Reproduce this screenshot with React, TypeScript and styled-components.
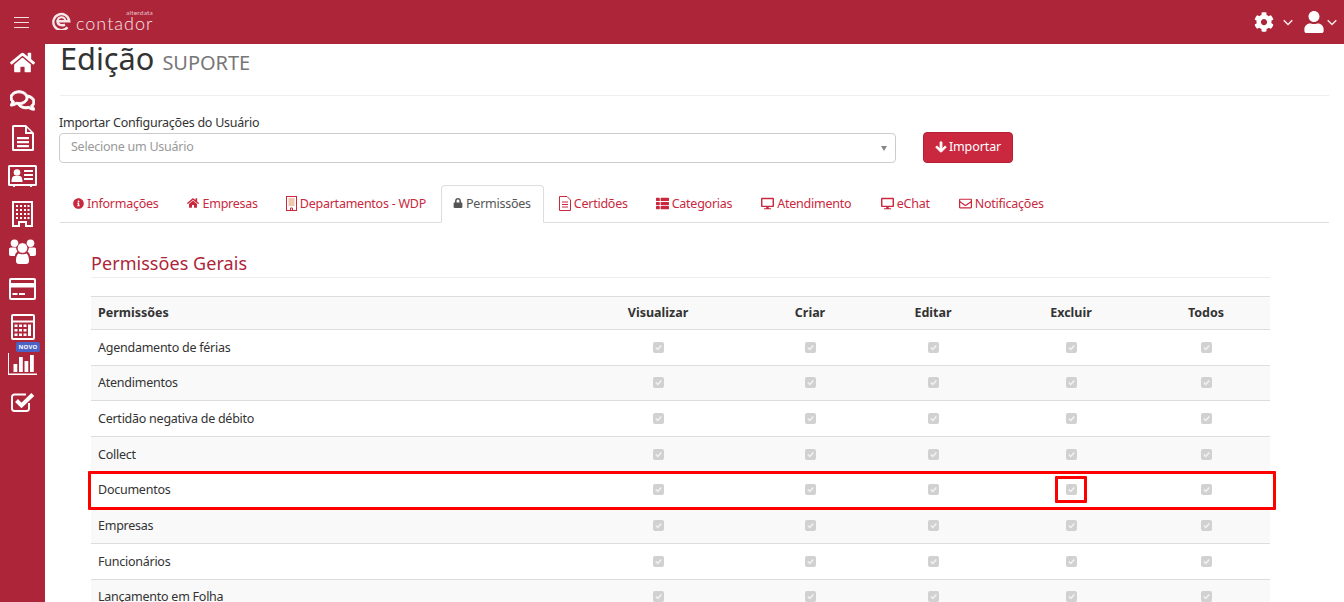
import React from 'react';
import styled, { createGlobalStyle } from 'styled-components';
import {
  FaHome, FaRegComments, FaInfoCircle, FaLock, FaThList, FaDesktop, FaRegEnvelope, FaCog, FaUser, FaArrowDown,
} from 'react-icons/fa';

const Global = createGlobalStyle`
  html, body { margin: 0; padding: 0; height: 602px; overflow: hidden; background: #fff; }
  body { font-family: "Noto Sans", "Open Sans", sans-serif; font-size: 12.5px; letter-spacing: -.25px; color: #333; }
`;

const RED = '#ad2539';
const LINK = '#c9283e';

const Page = styled.div`width: 1344px; height: 602px; display: flex; flex-direction: column; overflow: hidden;`;
const Header = styled.header`height: 44px; flex: none; background: ${RED}; display: flex; align-items: center; color: #fff;`;
const Burger = styled.div`
  width: 15px; height: 11px; margin-left: 14px; flex: none;
  border-top: 1px solid #f3dfe2; border-bottom: 1px solid #f3dfe2; position: relative; box-sizing: border-box;
  &::after { content: ""; position: absolute; left: 0; right: 0; top: 4px; height: 1px; background: #f3dfe2; }
`;
const Logo = styled.div`display: flex; align-items: flex-end; margin-left: 23px; width: 102px; height: 24px; position: relative; color: #f6e6e8; padding-bottom: 4px; box-sizing: border-box;`;
const LogoWord = styled.span`font-family: Lato, sans-serif; font-weight: 300; font-size: 18px; letter-spacing: 1px; line-height: 12px; margin-left: 5px; margin-bottom: 1px;`;
const LogoSmall = styled.span`position: absolute; right: 1px; top: 0; font-family: Lato, sans-serif; font-size: 6.5px; line-height: 6px; letter-spacing: .2px; font-weight: 400; opacity: .8;`;
const HeaderRight = styled.div`margin-left: auto; display: flex; align-items: center; color: #fff;`;
const GearIcon = styled(FaCog)`font-size: 20px;`;
const UserIcon = styled(FaUser)`font-size: 22px; margin-left: 10px;`;
const CaretSvg = styled.svg<{ $gap: number }>`display: block; margin-left: ${p => p.$gap}px;`;
const HeaderEnd = styled.span`width: 7px;`;

const Body = styled.div`flex: 1; display: flex; min-height: 0;`;
const Side = styled.nav`width: 45px; flex: none; background: ${RED}; display: flex; flex-direction: column; align-items: center; color: #fff;`;
const SideItem = styled.div`height: 37.700px; flex: none; width: 45px; display: flex; align-items: center; justify-content: center; position: relative; font-size: 25px;`;
const CommentsIcon = styled(FaRegComments)`stroke: currentColor; stroke-width: 22px;`;
const Badge = styled.span`
  position: absolute; top: -4px; left: 16px; width: 24px; height: 10px; border-radius: 2px; background: #4a63c4; color: #fff;
  font-size: 6px; font-weight: 700; line-height: 10px; text-align: center; letter-spacing: .2px;
`;

const Main = styled.main`flex: 1; min-width: 0; padding: 0 15px; overflow: hidden; position: relative;`;
const Title = styled.div`height: 52px; border-bottom: 1px solid #eee; box-sizing: border-box;`;
const TitleMain = styled.span`font-size: 30.700px; line-height: 28px; color: #333; letter-spacing: 0; display: inline-block;`;
const TitleSub = styled.span`font-size: 20px; color: #777; margin-left: 8px; letter-spacing: -.05px;`;

const ImportRow = styled.div`display: flex; align-items: flex-end; margin-top: 18px;`;
const Field = styled.div`width: 837px; margin-left: -1px;`;
const Label = styled.div`line-height: 17px; color: #333; margin-bottom: 2px;`;
const Select = styled.div`
  height: 30px; box-sizing: border-box; border: 1px solid #ccc; border-radius: 4px; display: flex; align-items: center; padding: 0 8px 3px 11px;
  color: #999; justify-content: space-between; background: #fff;
`;
const Arrow = styled.span`width: 0; height: 0; margin-top: 3px; border-left: 3px solid transparent; border-right: 3px solid transparent; border-top: 5px solid #888;`;
const Button = styled.button`
  margin-left: 27px; width: 90px; height: 31px; background: ${LINK}; border: 1px solid #b81f36; border-radius: 4px; color: #fff; font: 12.5px "Noto Sans", sans-serif; letter-spacing: -.1px;
  display: flex; align-items: center; justify-content: center; gap: 2px; padding: 0 0 2px;
`;
const DownIcon = styled(FaArrowDown)`stroke: currentColor; stroke-width: 40px;`;

const Tabs = styled.div`display: flex; margin-top: 22px; height: 38px; box-sizing: border-box; border-bottom: 1px solid #ddd;`;
const Tab = styled.div<{ $active?: boolean; $shift?: number }>`
  flex: none; height: 38px; box-sizing: border-box; display: flex; align-items: center; gap: 3px; padding: 0 12px 2px ${p => (p.$active ? 11 : 12)}px; margin: 0 2px 0 ${p => p.$shift ?? 0}px;
  color: ${p => (p.$active ? '#555' : LINK)}; border-radius: 4px 4px 0 0;
  border: 1px solid ${p => (p.$active ? '#ddd' : 'transparent')}; border-bottom-color: ${p => (p.$active ? '#fff' : 'transparent')}; background: ${p => (p.$active ? '#fff' : 'transparent')};
`;
const TabHome = styled(FaHome)`margin-right: 1px;`;

const Content = styled.section`padding: 28px 59px 0 31px; position: relative;`;
const SectionTitle = styled.h3`margin: 0; font-weight: 400; font-size: 18px; line-height: 25px; color: ${RED}; border-bottom: 1px solid #eee; padding-bottom: 1px; letter-spacing: .05px;`;
const Table = styled.table`width: 1179px; border-collapse: collapse; table-layout: fixed; margin-top: 18px;`;
const Th = styled.th<{ $w: number; $left?: boolean }>`
  width: ${p => p.$w}px; box-sizing: border-box; height: 33px; padding: 0 7px 1px; text-align: ${p => (p.$left ? 'left' : 'center')}; font-weight: 700; color: #333; letter-spacing: 0;
  background: #f9f9f9; border-top: 1px solid #ddd; border-bottom: 1px solid #ddd;
`;
const Tr = styled.tr<{ $stripe: boolean }>`background: ${p => (p.$stripe ? '#f9f9f9' : '#fff')};`;
const Td = styled.td<{ $left?: boolean }>`
  height: 35.7px; box-sizing: border-box; padding: 0 7px ${p => (p.$left ? '.5px' : '0')}; text-align: ${p => (p.$left ? 'left' : 'center')}; border-bottom: 1px solid #ddd; color: #333;
`;
const Check = styled.span`
  display: inline-flex; width: 11px; height: 11px; margin-bottom: 3px; border-radius: 2px; background: #d1d1d1; vertical-align: middle; align-items: center; justify-content: center; color: #f2f2f2;
`;
const Marker = styled.div<{ $l: number; $t: number; $w: number; $h: number }>`
  position: absolute; left: ${p => p.$l}px; top: ${p => p.$t}px; width: ${p => p.$w}px; height: ${p => p.$h}px; box-sizing: border-box; border: 3px solid #f00; border-radius: 1px; pointer-events: none;
`;

const Sv = styled.svg`display: block;`;

const LogoMark = () => (
  <Sv width="19" height="18" viewBox="0 0 19 18" fill="none" stroke="#f6e6e8" strokeWidth="2.400">
    <path d="M15.500 15.200A8 8 0 1 1 17.300 9.300H5.500C5.500 13 9.500 14.200 13 12.600" />
    <path d="M5.600 8.800C6 4.500 12 3.800 13.300 8" strokeWidth="2" />
  </Sv>
);
const Caret = ({ gap }: { gap: number }) => (
  <CaretSvg $gap={gap} width="10" height="7" viewBox="0 0 10 7" fill="none" stroke="#f7e9eb" strokeWidth="1.500"><path d="M.7 1.200L5 5.500 9.300 1.200" /></CaretSvg>
);
const FileIcon = () => (
  <Sv width="22" height="26" viewBox="0 0 22 26" fill="#fff">
    <path fillRule="evenodd" d="M1.500 0H14l8 8v16.500a1.500 1.500 0 0 1-1.500 1.500h-19A1.500 1.500 0 0 1 0 24.500v-23A1.500 1.500 0 0 1 1.500 0zM2 2v22h18V9h-7V2zM15 3v4h4z" />
    <path d="M5 12h12v2.200H5zM5 16h12v2.200H5zM5 20h12v2.200H5z" />
  </Sv>
);
const IdCard = () => (
  <Sv width="29" height="22" viewBox="0 0 29 22" fill="#fff">
    <path fillRule="evenodd" d="M1.500 0h26A1.500 1.500 0 0 1 29 1.500v18a1.500 1.500 0 0 1-1.500 1.500H24v1h-2v-1H7v1H5v-1H1.500A1.500 1.500 0 0 1 0 19.500v-18A1.500 1.500 0 0 1 1.500 0zM2 2v17h25V2z" />
    <circle cx="9" cy="7.500" r="3.300" />
    <path d="M3.500 17c0-4 1-6 2.500-6h6c1.500 0 2.500 2 2.500 6z" />
    <path d="M16 5h9v2h-9zM16 9h9v2h-9zM16 13h9v2h-9z" />
  </Sv>
);
const Building = () => (
  <Sv width="21" height="26" viewBox="0 0 21 26" fill="#fff">
    <path fillRule="evenodd" d="M0 0h21v26H13v-4H8v4H0zM2 2v22h4v-4h9v4h4V2z" />
    {[4, 8, 12, 16].flatMap(y => [4, 8, 12, 15.500].map(x => <rect key={`${x}-${y}`} x={x} y={y} width="2" height="2" />))}
  </Sv>
);
const Users = () => (
  <Sv width="27" height="25" viewBox="0 0 27 25" fill="#fff">
    <circle cx="5.500" cy="4.200" r="3.800" />
    <circle cx="21.500" cy="4.200" r="3.800" />
    <path d="M0 10c0-1 1-1.500 2.500-1.500H7C7.500 11 8 12 8.500 12.500 6.500 14 6 15.500 6 17H2c-1.500 0-2-1-2-2zM27 10c0-1-1-1.500-2.500-1.500H20c-.5 2.500-1 3.500-1.500 4 2 1.500 2.500 3 2.500 4.500h4c1.500 0 2-1 2-2z" />
    <circle cx="13.500" cy="9" r="5.300" stroke={RED} strokeWidth=".8" />
    <path d="M7 22c0 2 1 3 3 3h7c2 0 3-1 3-3 0-3-.5-6-2.500-7.500-1.500 1-6.500 1-8 0C7.500 16 7 19 7 22z" />
  </Sv>
);
const CreditCard = () => (
  <Sv width="27" height="22" viewBox="0 0 27 22" fill="#fff">
    <path fillRule="evenodd" d="M2 0h23a2 2 0 0 1 2 2v18a2 2 0 0 1-2 2H2a2 2 0 0 1-2-2V2a2 2 0 0 1 2-2zM2 5h23V2.500a.5.5 0 0 0-.5-.5h-22a.5.5 0 0 0-.5.5zM2 9.500v10a.5.5 0 0 0 .5.5h22a.5.5 0 0 0 .5-.5v-10z" />
    <path d="M3.500 15h5v2h-5zM10 15h6v2h-6z" />
  </Sv>
);
const Calculator = () => (
  <Sv width="24" height="26" viewBox="0 0 24 26" fill="#fff">
    <path fillRule="evenodd" d="M2 0h20a2 2 0 0 1 2 2v22a2 2 0 0 1-2 2H2a2 2 0 0 1-2-2V2a2 2 0 0 1 2-2zM2 2v4.500h20V2zM2 8.500V24h20V8.500z" />
    {[10.500, 15, 19.500].flatMap(y => [3.500, 8, 12.500].map(x => <rect key={`${x}-${y}`} x={x} y={y} width="3" height="2.500" />))}
    <rect x="17" y="10.500" width="3" height="11.500" />
  </Sv>
);
const Chart = () => (
  <Sv width="29" height="22" viewBox="0 0 29 22" fill="#fff">
    <path d="M0 0h1v20.500h28V22H0z" />
    <path d="M5.500 11h3.800v8H5.500zM11 4h3.800v15H11zM16.500 8h3.800v11h-3.800zM22 2h3.800v17H22z" />
  </Sv>
);
const CheckSquare = () => (
  <Sv width="24" height="20" viewBox="0 0 24 20" fill="none">
    <path d="M18 11v5.500a2.500 2.500 0 0 1-2.500 2.500H3.500A2.500 2.500 0 0 1 1 16.500V5a2.500 2.500 0 0 1 2.500-2.500H15" stroke="#fff" strokeWidth="1.900" />
    <path d="M5.500 8.500l5 5L21.800 2.500" stroke="#fff" strokeWidth="4" />
  </Sv>
);
const TabDoc = () => (
  <Sv width="12" height="15" viewBox="0 0 12 15" fill="none" stroke={LINK}>
    <path d="M.5.500h7.500l3.500 3.500v10.500H.5z" /><path d="M3 6h6M3 8.500h6M3 11h6" />
  </Sv>
);
const TabBuilding = () => (
  <Sv width="11" height="15" viewBox="0 0 11 15" fill="none" stroke={LINK}>
    <rect x=".5" y=".5" width="10" height="14" /><path d="M2.500 3h6M2.500 5h6M2.500 7h6M2.500 9h6" stroke="#e0905a" />
    <path d="M4.500 14v-2h2v2" />
  </Sv>
);
const CheckMark = () => (
  <svg width="9" height="9" viewBox="0 0 9 9" fill="none" stroke="currentColor" strokeWidth="1.500"><path d="M1.800 4.500l2 2 3.500-4" /></svg>
);

const rows = ['Agendamento de férias', 'Atendimentos', 'Certidão negativa de débito', 'Collect', 'Documentos', 'Empresas', 'Funcionários', 'Lançamento em Folha'];
const cols: [string, number][] = [['Visualizar', 192], ['Criar', 112], ['Editar', 134], ['Excluir', 142], ['Todos', 128]];

export default function App() {
  return (
    <Page>
      <Global />
      <Header>
        <Burger />
        <Logo>
          <LogoMark />
          <LogoWord>contador</LogoWord>
          <LogoSmall>alterdata</LogoSmall>
        </Logo>
        <HeaderRight>
          <GearIcon />
          <Caret gap={9} />
          <UserIcon />
          <Caret gap={2} />
          <HeaderEnd />
        </HeaderRight>
      </Header>
      <Body>
        <Side>
          <SideItem><FaHome /></SideItem>
          <SideItem><CommentsIcon /></SideItem>
          <SideItem><FileIcon /></SideItem>
          <SideItem><IdCard /></SideItem>
          <SideItem><Building /></SideItem>
          <SideItem><Users /></SideItem>
          <SideItem><CreditCard /></SideItem>
          <SideItem><Calculator /></SideItem>
          <SideItem><Badge>NOVO</Badge><Chart /></SideItem>
          <SideItem><CheckSquare /></SideItem>
        </Side>
        <Main>
          <Title>
            <TitleMain>Edição</TitleMain>
            <TitleSub>SUPORTE</TitleSub>
          </Title>
          <ImportRow>
            <Field>
              <Label>Importar Configurações do Usuário</Label>
              <Select>Selecione um Usuário<Arrow /></Select>
            </Field>
            <Button><DownIcon size={12} />Importar</Button>
          </ImportRow>
          <Tabs>
            <Tab><FaInfoCircle size={11} />Informações</Tab>
            <Tab><TabHome size={12} />Empresas</Tab>
            <Tab><TabBuilding />Departamentos - WDP</Tab>
            <Tab $active><FaLock size={10} />Permissões</Tab>
            <Tab><TabDoc />Certidões</Tab>
            <Tab><FaThList size={13} />Categorias</Tab>
            <Tab $shift={1}><FaDesktop size={13} />Atendimento</Tab>
            <Tab $shift={1.5}><FaDesktop size={13} />eChat</Tab>
            <Tab $shift={1}><FaRegEnvelope size={13} />Notificações</Tab>
          </Tabs>
          <Content>
            <SectionTitle>Permissões Gerais</SectionTitle>
            <Table>
              <thead>
                <tr>
                  <Th $w={471} $left>Permissões</Th>
                  {cols.map(([n, w]) => <Th key={n} $w={w}>{n}</Th>)}
                </tr>
              </thead>
              <tbody>
                {rows.map((r, i) => (
                  <Tr key={r} $stripe={i % 2 === 1}>
                    <Td $left>{r}</Td>
                    {cols.map(([n]) => <Td key={n}><Check><CheckMark /></Check></Td>)}
                  </Tr>
                ))}
              </tbody>
            </Table>
            <Marker $l={28} $t={248} $w={1188} $h={39} />
            <Marker $l={995} $t={253} $w={32} $h={27} />
          </Content>
        </Main>
      </Body>
    </Page>
  );
}
